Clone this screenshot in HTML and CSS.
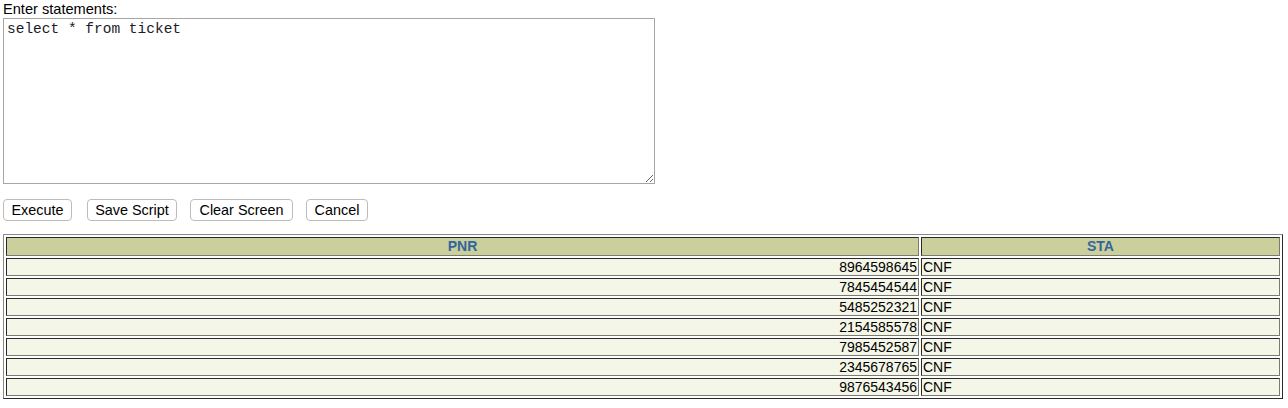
FILE: index.html
```html
<!DOCTYPE html>
<html>
<head>
<meta charset="utf-8">
<link rel="stylesheet" href="styles.css">
</head>
<body>
<div class="page">
  <div class="label">Enter statements:</div>
  <textarea class="editor">select * from ticket</textarea>
  <div class="actions">
    <button class="btn btn-exec">Execute</button>
    <button class="btn btn-save">Save Script</button>
    <button class="btn btn-clear">Clear Screen</button>
    <button class="btn btn-cancel">Cancel</button>
  </div>
  <table class="results">
    <thead>
      <tr><th class="col-pnr">PNR</th><th class="col-sta">STA</th></tr>
    </thead>
    <tbody>
      <tr><td class="num">8964598645</td><td>CNF</td></tr>
      <tr><td class="num">7845454544</td><td>CNF</td></tr>
      <tr><td class="num">5485252321</td><td>CNF</td></tr>
      <tr><td class="num">2154585578</td><td>CNF</td></tr>
      <tr><td class="num">7985452587</td><td>CNF</td></tr>
      <tr><td class="num">2345678765</td><td>CNF</td></tr>
      <tr><td class="num">9876543456</td><td>CNF</td></tr>
    </tbody>
  </table>
</div>
</body>
</html>
```

FILE: styles.css
```css
html, body {
  margin: 0;
  padding: 0;
  background: #ffffff;
}

.page {
  padding: 0 3px;
  font-family: "Liberation Sans", Arial, sans-serif;
  font-size: 14px;
  color: #000;
}

.label {
  height: 18px;
  line-height: 18px;
  font-size: 14.6px;
}

.editor {
  display: block;
  box-sizing: border-box;
  width: 652px;
  height: 166px;
  margin: 0;
  padding: 2px 3px;
  border: 1px solid #a6a6a6;
  font-family: "Liberation Mono", "Courier New", monospace;
  font-size: 14.5px;
  line-height: 17px;
  color: #1a1a2a;
  resize: both;
}

.actions {
  display: flex;
  gap: 13px;
  margin-top: 15px;
  height: 22px;
}

.btn {
  box-sizing: border-box;
  height: 22px;
  padding: 0;
  margin: 0;
  white-space: nowrap;
  text-align: center;
  background: #ffffff;
  border: 1px solid #bcbcbc;
  border-radius: 4px;
  font-family: "Liberation Sans", Arial, sans-serif;
  font-size: 14.4px;
  color: #000;
  line-height: 20px;
}

.btn-exec { width: 69px; margin-right: 2px; }
.btn-save { width: 90px; }
.btn-clear { width: 103px; }
.btn-cancel { width: 62px; }

.results {
  margin-top: 13px;
  width: 1280px;
  box-sizing: border-box;
  border-collapse: separate;
  border-spacing: 2px;
  border: 1px solid;
  border-color: #8a8a8a #2c2c2c #2c2c2c #8a8a8a;
}

.results th,
.results td {
  border: 1px solid;
  border-color: #2a2a2a #7a7a72 #7a7a72 #2a2a2a;
  padding: 0 1px;
}

.results th {
  background: #cbcf9b;
  color: #3366a0;
  font-weight: bold;
  font-size: 14px;
  height: 17px;
  line-height: 17px;
  text-align: center;
}

.results td {
  background: #f4f6e7;
  height: 16px;
  line-height: 16px;
  font-size: 14px;
  text-align: left;
}

.results .col-pnr { width: 909px; }

.results td.num { text-align: right; }
```
